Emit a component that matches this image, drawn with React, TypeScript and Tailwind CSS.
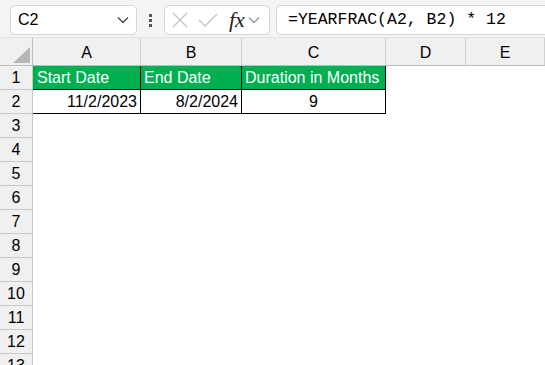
import React from 'react';

const cols = [
  { key: 'A', w: 'w-[108px]' },
  { key: 'B', w: 'w-[101px]' },
  { key: 'C', w: 'w-[144px]' },
  { key: 'D', w: 'w-[80px]' },
  { key: 'E', w: 'flex-1' },
];

const Chevron = ({ className }: { className?: string }) => (
  <svg width="12" height="8" viewBox="0 0 12 8" className={className}>
    <path d="M1 1.5 L6 6.5 L11 1.5" fill="none" stroke="currentColor" strokeWidth="1.3" />
  </svg>
);

const App: React.FC = () => {
  const rows = Array.from({ length: 13 }, (_, i) => i + 1);

  return (
    <div className="w-[545px] h-[365px] overflow-hidden bg-white font-['Liberation_Sans',sans-serif]">
      {/* formula toolbar */}
      <div className="h-[38px] bg-[#f4f4f4] border-b border-[#e2e2e2] flex items-start pt-[5px] pl-[10px] gap-0">
        <div className="w-[127px] h-[30px] bg-white border border-[#d6d6d6] rounded-[5px] flex items-center justify-between pl-[7px] pr-[7px]">
          <span className="text-[16px] text-black">C2</span>
          <Chevron className="text-[#444]" />
        </div>
        <div className="w-[27px] h-[30px] flex flex-col items-center justify-center gap-[2px]">
          <span className="w-[3px] h-[3px] bg-[#555]" />
          <span className="w-[3px] h-[3px] bg-[#555]" />
          <span className="w-[3px] h-[3px] bg-[#555]" />
        </div>
        <div className="w-[106px] h-[30px] bg-white border border-[#d6d6d6] rounded-[5px] flex items-center pl-[7px]">
          <svg width="16" height="16" viewBox="0 0 16 16">
            <path d="M1 1 L15 15 M15 1 L1 15" stroke="#c4c4c4" strokeWidth="1.3" fill="none" />
          </svg>
          <svg width="20" height="16" viewBox="0 0 20 16" className="ml-[10px]">
            <path d="M1 8 L7 14 L19 2" stroke="#c4c4c4" strokeWidth="1.3" fill="none" />
          </svg>
          <span className="ml-[11px] font-['Liberation_Serif',serif] italic text-[22px] leading-none text-[#222]">fx</span>
          <Chevron className="ml-[3px] text-[#999]" />
        </div>
        <div className="ml-[6px] flex-1 h-[30px] bg-white border border-r-0 border-[#d6d6d6] rounded-l-[5px] flex items-center pl-[11px]">
          <span className="font-['Liberation_Mono',monospace] text-[16.5px] text-black whitespace-pre">=YEARFRAC(A2, B2) * 12</span>
        </div>
      </div>

      {/* column headers */}
      <div className="flex h-[28px] bg-[#f0f0f0] border-b border-[#bdbdbd]">
        <div className="w-[33px] border-r border-[#bdbdbd] flex items-end justify-end pr-[2px] pb-[2px]">
          <svg width="17" height="16" viewBox="0 0 17 16">
            <path d="M17 0 L17 16 L0 16 Z" fill="#b7b7b7" />
          </svg>
        </div>
        {cols.map((c) => (
          <div
            key={c.key}
            className={`${c.w} border-r border-[#d0d0d0] flex items-center justify-center text-[16px] text-black pt-[2px]`}
          >
            {c.key}
          </div>
        ))}
      </div>

      {/* rows */}
      {rows.map((r) => (
        <div key={r} className="flex h-[24px]">
          <div className="w-[33px] shrink-0 bg-[#f0f0f0] border-r border-b border-[#c8c8c8] flex items-center justify-center text-[16px] text-black">
            {r}
          </div>
          {r === 1 && (
            <>
              <div className="w-[108px] bg-[#00b050] border-r border-b border-black text-white text-[16px] flex items-center pl-[4px]">Start Date</div>
              <div className="w-[101px] bg-[#00b050] border-r border-b border-black text-white text-[16px] flex items-center pl-[3px]">End Date</div>
              <div className="w-[144px] bg-[#00b050] border-r border-b border-black text-white text-[16px] flex items-center pl-[3px]">Duration in Months</div>
            </>
          )}
          {r === 2 && (
            <>
              <div className="w-[108px] border-r border-b border-black text-black text-[16px] flex items-center justify-end pr-[3px]">11/2/2023</div>
              <div className="w-[101px] border-r border-b border-black text-black text-[16px] flex items-center justify-end pr-[3px]">8/2/2024</div>
              <div className="w-[144px] border-r border-b border-black text-black text-[16px] flex items-center justify-center">9</div>
            </>
          )}
          <div className="flex-1" />
        </div>
      ))}
    </div>
  );
};

export default App;
